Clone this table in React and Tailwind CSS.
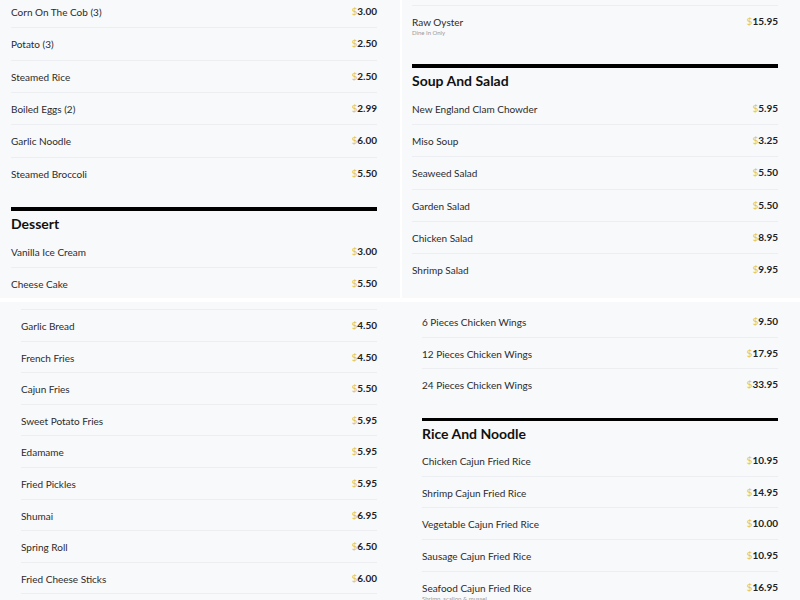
import React from 'react';

const font = { fontFamily: 'Lato, "Open Sans", "Liberation Sans", sans-serif' };

// rows of the menu, grouped the way they show in each column
const topLeft = [
  { name: 'Corn On The Cob (3)', price: '3.00' },
  { name: 'Potato (3)', price: '2.50' },
  { name: 'Steamed Rice', price: '2.50' },
  { name: 'Boiled Eggs (2)', price: '2.99' },
  { name: 'Garlic Noodle', price: '6.00' },
  { name: 'Steamed Broccoli', price: '5.50' },
];
const dessert = [
  { name: 'Vanilla Ice Cream', price: '3.00' },
  { name: 'Cheese Cake', price: '5.50' },
];
const soup = [
  { name: 'New England Clam Chowder', price: '5.95' },
  { name: 'Miso Soup', price: '3.25' },
  { name: 'Seaweed Salad', price: '5.50' },
  { name: 'Garden Salad', price: '5.50' },
  { name: 'Chicken Salad', price: '8.95' },
  { name: 'Shrimp Salad', price: '9.95' },
];
const sides = [
  { name: 'Garlic Bread', price: '4.50' },
  { name: 'French Fries', price: '4.50' },
  { name: 'Cajun Fries', price: '5.50' },
  { name: 'Sweet Potato Fries', price: '5.95' },
  { name: 'Edamame', price: '5.95' },
  { name: 'Fried Pickles', price: '5.95' },
  { name: 'Shumai', price: '6.95' },
  { name: 'Spring Roll', price: '6.50' },
  { name: 'Fried Cheese Sticks', price: '6.00' },
];
const wings = [
  { name: '6 Pieces Chicken Wings', price: '9.50' },
  { name: '12 Pieces Chicken Wings', price: '17.95' },
  { name: '24 Pieces Chicken Wings', price: '33.95' },
];
const rice = [
  { name: 'Chicken Cajun Fried Rice', price: '10.95' },
  { name: 'Shrimp Cajun Fried Rice', price: '14.95' },
  { name: 'Vegetable Cajun Fried Rice', price: '10.00' },
  { name: 'Sausage Cajun Fried Rice', price: '10.95' },
  { name: 'Seafood Cajun Fried Rice', price: '16.95', note: 'Shrimp, scallop & mussel' },
];

function Price({ value }) {
  return (
    <span className="text-[10px] leading-[14px] font-bold text-[#222] -mt-[1px]">
      <span className="text-[#e3c54f] font-normal">$</span>
      {value}
    </span>
  );
}

function Row({ item, h, border = true }) {
  return (
    <div
      className={`flex justify-between items-start pt-[9px] ${border ? 'border-b border-[#eceef1]' : ''}`}
      style={{ height: h }}
    >
      <div className="flex flex-col">
        <span className="text-[10px] leading-[14px] text-[#2b2b2b]">{item.name}</span>
        {item.note && <span className="text-[6px] leading-[7px] text-[#9a9a9a]">{item.note}</span>}
      </div>
      <Price value={item.price} />
    </div>
  );
}

function List({ items, h, lastBorder = false }) {
  return (
    <div>
      {items.map((it, i) => (
        <Row key={it.name} item={it} h={h} border={lastBorder || i < items.length - 1} />
      ))}
    </div>
  );
}

function Heading({ title, h = 'h-[25px]', mt }) {
  return (
    <div className={mt}>
      <div className="h-[3.5px] bg-black" />
      <div className={`${h} flex items-center text-[14px] font-bold text-[#111]`}>{title}</div>
    </div>
  );
}

export default function App() {
  return (
    <div className="w-[800px] h-[600px] overflow-hidden bg-white flex flex-col" style={font}>
      {/* upper half */}
      <div className="h-[298px] overflow-hidden bg-[#f8f9fb] grid grid-cols-2">
        <div className="pl-[11px] pr-[23px]">
          <div className="-mt-[4.2px]">
            <List items={topLeft} h="32.4px" />
          </div>
          <Heading title="Dessert" mt="mt-[17px]" />
          <List items={dessert} h="32.4px" lastBorder />
        </div>
        <div className="pl-[10px] pr-[22px] border-l-2 border-white">
          <div className="h-[6px] border-b border-[#eceef1]" />
          <div className="flex justify-between items-start pt-[9px] h-[40px]">
            <div className="flex flex-col">
              <span className="text-[10px] leading-[14px] text-[#2b2b2b]">Raw Oyster</span>
              <span className="text-[6px] leading-[8px] text-[#9a9a9a]">Dine In Only</span>
            </div>
            <Price value="15.95" />
          </div>
          <Heading title="Soup And Salad" mt="mt-[18px]" />
          <List items={soup} h="32.4px" />
        </div>
      </div>

      <div className="h-[4px] bg-white" />

      {/* lower half */}
      <div className="h-[298px] overflow-hidden bg-[#f8f9fb] grid grid-cols-2">
        <div className="pl-[21px] pr-[23px]">
          <div className="h-[8px] border-b border-[#eceef1]" />
          <List items={sides} h="31.6px" lastBorder />
        </div>
        <div className="pl-[22px] pr-[22px]">
          <div className="h-[4px]" />
          <List items={wings} h="31.6px" />
          <Heading title="Rice And Noodle" h="h-[24px]" mt="mt-[17px]" />
          <List items={rice} h="31.6px" />
        </div>
      </div>
    </div>
  );
}
